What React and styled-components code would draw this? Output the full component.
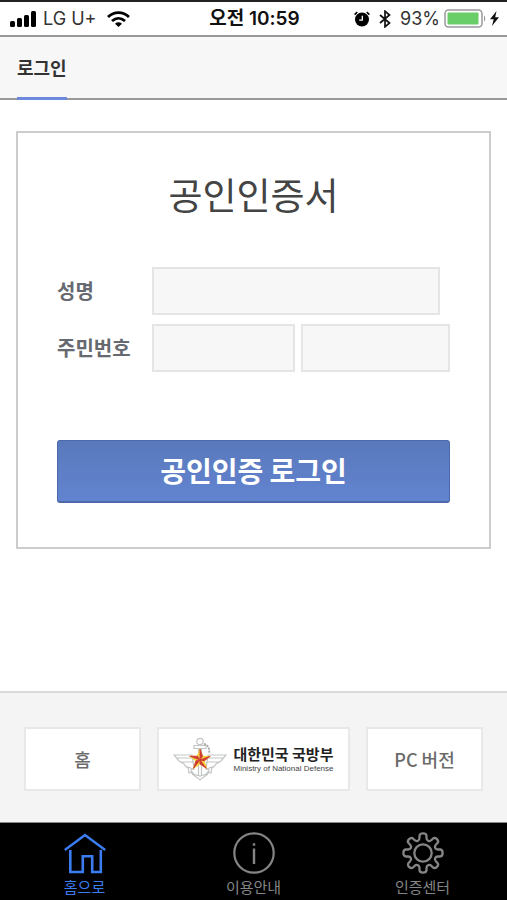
import React from "react";
import styled, { createGlobalStyle, css } from "styled-components";

const GlobalStyle = createGlobalStyle`
  *, *::before, *::after { box-sizing: border-box; }
  body {
    margin: 0;
    background: #fff;
    color: #333;
    font-family: "Noto Sans CJK KR", "Noto Sans", sans-serif;
  }
  h1, h2 { margin: 0; }
  svg { display: block; flex: none; }
`;

const Screen = styled.div`
  min-height: 100vh;
  display: flex;
  flex-direction: column;
`;

const StatusBar = styled.div`
  display: grid;
  grid-template-columns: 1fr auto 1fr;
  align-items: center;
  height: 37px;
  padding: 0 8px 0 10px;
  border-top: 2px solid #222;
  border-bottom: 2px solid #999;
  color: #111;
  font: 18px/24px Inter, "Noto Sans CJK KR", sans-serif;
`;

const StatusGroup = styled.div`
  display: flex;
  align-items: center;
  gap: ${({ $gap }) => $gap}px;
  justify-content: ${({ $end }) => ($end ? "flex-end" : "flex-start")};
`;

const Carrier = styled.span`
  color: #333;
  margin-right: 5px;
`;

const Clock = styled.time`
  font-weight: 600;
  font-size: 19px;
`;

const Percent = styled.span`
  color: #333;
`;

const Header = styled.header`
  display: flex;
  height: 63px;
  padding: 0 17px;
  background: #f7f7f7;
  box-shadow: inset 0 -2px #999;
`;

const HeaderTitle = styled.h1`
  display: flex;
  align-items: center;
  border-bottom: 3px solid #6b8ade;
  color: #333;
  font-size: 18px;
  line-height: 24px;
  font-weight: 700;
`;

const Main = styled.main`
  flex: 1;
  padding: 31px 16px;
`;

const Card = styled.form`
  padding: 33px 39px 44px;
  border: 2px solid #ccc;
`;

const CardTitle = styled.h2`
  margin-bottom: 45px;
  color: #444;
  font-size: 37px;
  line-height: 56px;
  font-weight: 400;
  text-align: center;
`;

const FieldRow = styled.div`
  display: grid;
  grid-template-columns: 95px minmax(0, 1fr);
  align-items: center;
  margin-bottom: 9px;
`;

const Label = styled.label`
  color: #666a70;
  font-size: 20px;
  line-height: 28px;
  font-weight: 700;
`;

const Fields = styled.div`
  display: flex;
  gap: 6px;
  padding-right: ${({ $inset }) => ($inset ? 10 : 0)}px;
`;

const TextInput = styled.input`
  flex: ${({ $grow }) => $grow || 1} 1 0;
  width: 0;
  min-width: 0;
  height: 48px;
  padding: 0 10px;
  border: 2px solid #e3e5e6;
  border-radius: 0;
  background: #f7f7f8;
  color: #444;
  font: inherit;
  font-size: 18px;
`;

const LoginButton = styled.button`
  display: block;
  width: 100%;
  height: 63px;
  margin-top: 68px;
  padding: 0 0 3px;
  border: 1px solid #4c69a9;
  border-bottom-width: 2px;
  border-radius: 3px;
  background: linear-gradient(#5a79bc, #6284d0);
  color: #fff;
  font: inherit;
  font-size: 28px;
  line-height: 40px;
  font-weight: 700;
`;

const Footer = styled.footer`
  display: grid;
  grid-template-columns: 117fr 193fr 117fr;
  gap: 16px;
  padding: 34px 24px 31px;
  border-top: 2px solid #dadada;
  background: #f4f4f4;
`;

const FooterLink = styled.a`
  display: flex;
  align-items: center;
  justify-content: center;
  gap: 6px;
  height: 64px;
  border: 2px solid #e8e8e8;
  background: #fff;
  color: #6b6b6b;
  font-size: 18px;
  line-height: 24px;
  font-weight: 500;
  text-decoration: none;
`;

const Ministry = styled.span`
  display: flex;
  flex-direction: column;
  white-space: nowrap;
`;

const MinistryName = styled.strong`
  color: #222;
  font-size: 15px;
  line-height: 20px;
  font-weight: 700;
`;

const MinistryEnglish = styled.span`
  color: #444;
  font: 8px/10px "Liberation Sans", sans-serif;
`;

const TabBar = styled.nav`
  display: grid;
  grid-template-columns: repeat(3, 1fr);
  height: 78px;
  border-top: 1px solid #888;
  background: #000;
`;

const Tab = styled.a`
  display: flex;
  flex-direction: column;
  align-items: center;
  padding-top: 9px;
  color: #858585;
  font-size: 15px;
  line-height: 20px;
  text-decoration: none;
  gap: 3px;
  ${({ $active }) =>
    $active &&
    css`
      color: #3b7cf0;
    `}
`;

function SignalIcon() {
  return (
    <svg width="27" height="16" viewBox="0 0 27 16" fill="#000" aria-hidden="true">
      <rect x="0" y="10" width="5" height="6" rx="1.5" />
      <rect x="7" y="7" width="5" height="9" rx="1.5" />
      <rect x="14" y="4" width="5" height="12" rx="1.5" />
      <rect x="21" y="0" width="5" height="16" rx="1.5" />
    </svg>
  );
}

function WifiIcon() {
  return (
    <svg width="23" height="16" viewBox="0 0 23 16" fill="none" stroke="#000" strokeWidth="2.8" aria-hidden="true">
      <path d="M1 6C7 .2 16 .2 22 6" />
      <path d="M5 10c4-3.6 9-3.6 13 0" />
      <path d="M8 12.7c2.2-1.8 4.8-1.8 7 0L11.5 16z" fill="#000" stroke="none" />
    </svg>
  );
}

function AlarmIcon() {
  return (
    <svg width="16" height="16" viewBox="0 0 16 16" fill="none" stroke="#000" aria-hidden="true">
      <circle cx="8" cy="8.5" r="7" fill="#000" stroke="none" />
      <path d="M.6 3.6 3.3 1M15.4 3.6 12.7 1" strokeWidth="1.6" />
      <path d="M8.3 4.7v4.4H5.2" stroke="#fff" strokeWidth="1.3" />
    </svg>
  );
}

function BluetoothIcon() {
  return (
    <svg width="12" height="18" viewBox="0 0 12 18" fill="none" stroke="#111" strokeWidth="1.7" aria-hidden="true">
      <path d="m1 5 9.5 8L6 16.8V1.2L10.5 5 1 13" />
    </svg>
  );
}

function BatteryIcon() {
  return (
    <svg width="42" height="19" viewBox="0 0 42 19" fill="none" aria-hidden="true">
      <rect x="1" y="1" width="37" height="17" rx="3.5" stroke="#999" strokeWidth="1.5" />
      <rect x="3.5" y="3.5" width="31" height="12" rx="1" fill="#6ace68" />
      <path d="M40 6.5c1.6.5 1.6 5.5 0 6z" fill="#999" />
    </svg>
  );
}

function BoltIcon() {
  return (
    <svg width="9" height="15" viewBox="0 0 9 15" fill="#111" aria-hidden="true">
      <path d="M6.5 0 0 8.3h3.7L2 15l7-8.8H5.2z" />
    </svg>
  );
}

function MinistryEmblem() {
  return (
    <svg width="54" height="44" viewBox="0 0 54 44" fill="none" stroke="#c4c6c6" strokeWidth="1.2" aria-hidden="true">
      <circle cx="27" cy="4.5" r="3.2" />
      <path d="M21 8.5h12v3H21zM25.5 11v28M28.5 11v28" />
      <path d="M1 18h18l2 14C15 32 12 29 11 27L6 24zM3 21h17M8 25h13" />
      <path d="M53 18H35l-2 14c6 0 9-3 10-5l5-3zM51 21H34M46 25H33" />
      <path d="m15 30 5 2-2 1c2 5 5 5 9 6 4-1 7-1 9-6l-2-1 5-2-1 6-2-1c-2 5-7 5-9 8-2-3-7-3-9-8l-2 1z" fill="#fff" />
      <path d="M31 7c4 1 6 5 5 9" stroke="#aaa" strokeWidth="2" strokeDasharray="2 1" />
      <path d="m27 11 3 7.7 8.2.2-6.5 5.1 2.6 8.2-7.3-4.8-7.3 4.8 2.6-8.2-6.5-5.1 8.2-.2z" fill="#f5d43d" stroke="none" />
      <path d="M27 12v11l2.5-3.8zM37.2 19.2 27 23l4.1.9zM33.4 31.3 27 23v3.9zM20.6 31.3 27 23l-4.1.9zM16.8 19.2 27 23l-2.5-3.8z" fill="#cf3b35" stroke="#cf3b35" strokeWidth=".8" />
    </svg>
  );
}

function HomeIcon() {
  return (
    <svg width="42" height="42" viewBox="0 0 42 42" fill="none" stroke="currentColor" strokeWidth="2.6" aria-hidden="true">
      <path d="M.8 18 21 3l20.2 15" strokeWidth="2.5" />
      <path d="M6.3 18v22H18.8V24.3h9.4V40h8.6V18" />
    </svg>
  );
}

function InfoIcon() {
  return (
    <svg width="42" height="42" viewBox="0 0 42 42" fill="none" stroke="currentColor" strokeWidth="2.2" aria-hidden="true">
      <circle cx="21" cy="21" r="19.7" />
      <path d="M21 11.2v2.6M21 16.5V32" strokeWidth="2.4" />
    </svg>
  );
}

function GearIcon() {
  return (
    <svg width="42" height="42" viewBox="0 0 42 42" fill="none" stroke="currentColor" strokeWidth="2.3" strokeLinejoin="round" aria-hidden="true">
      <circle cx="21" cy="21" r="8.7" />
      <path d="M17.5 4c0-3.5 7-3.5 7 0v2c0 3 3 4 5 2l1.3-1.3c2.5-2.5 7 2 4.5 4.5L34 12.5c-2 2-1 5 2 5h2c3.5 0 3.5 7 0 7h-2c-3 0-4 3-2 5l1.3 1.3c2.5 2.5-2 7-4.5 4.5L29.5 34c-2-2-5-1-5 2v2c0 3.5-7 3.5-7 0v-2c0-3-3-4-5-2l-1.3 1.3c-2.5 2.5-7-2-4.5-4.5L8 29.5c2-2 1-5-2-5H4c-3.5 0-3.5-7 0-7h2c3 0 4-3 2-5l-1.3-1.3c-2.5-2.5 2-7 4.5-4.5L12.5 8c2 2 5 1 5-2z" />
    </svg>
  );
}

export default function App() {
  return (
    <Screen>
      <GlobalStyle />
      <StatusBar>
        <StatusGroup $gap={6}>
          <SignalIcon />
          <Carrier>LG U+</Carrier>
          <WifiIcon />
        </StatusGroup>
        <Clock dateTime="10:59">오전 10:59</Clock>
        <StatusGroup $gap={9} $end>
          <AlarmIcon />
          <BluetoothIcon />
          <StatusGroup $gap={4}>
            <Percent>93%</Percent>
            <BatteryIcon />
            <BoltIcon />
          </StatusGroup>
        </StatusGroup>
      </StatusBar>
      <Header>
        <HeaderTitle>로그인</HeaderTitle>
      </Header>
      <Main>
        <Card onSubmit={(event) => event.preventDefault()}>
          <CardTitle>공인인증서</CardTitle>
          <FieldRow>
            <Label htmlFor="name">성명</Label>
            <Fields $inset>
              <TextInput id="name" type="text" />
            </Fields>
          </FieldRow>
          <FieldRow>
            <Label htmlFor="resident-front">주민번호</Label>
            <Fields>
              <TextInput id="resident-front" type="text" inputMode="numeric" maxLength={6} $grow={142} />
              <TextInput type="password" aria-label="주민번호 뒷자리" maxLength={7} $grow={149} />
            </Fields>
          </FieldRow>
          <LoginButton type="submit">공인인증 로그인</LoginButton>
        </Card>
      </Main>
      <Footer>
        <FooterLink href="#home">홈</FooterLink>
        <FooterLink href="#ministry">
          <MinistryEmblem />
          <Ministry>
            <MinistryName>대한민국 국방부</MinistryName>
            <MinistryEnglish>Ministry of National Defense</MinistryEnglish>
          </Ministry>
        </FooterLink>
        <FooterLink href="#pc">PC 버전</FooterLink>
      </Footer>
      <TabBar>
        <Tab href="#home" $active aria-current="page">
          <HomeIcon />
          홈으로
        </Tab>
        <Tab href="#guide">
          <InfoIcon />
          이용안내
        </Tab>
        <Tab href="#cert">
          <GearIcon />
          인증센터
        </Tab>
      </TabBar>
    </Screen>
  );
}
